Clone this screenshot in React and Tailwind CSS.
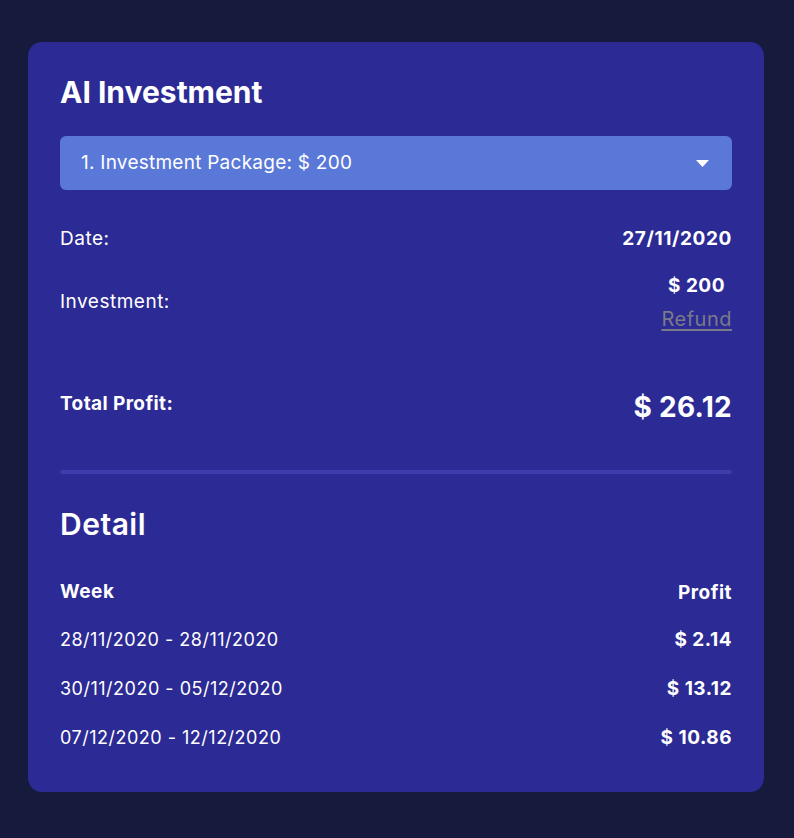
import React from "react";

const weeks = [
  { range: "28/11/2020 - 28/11/2020", profit: "$ 2.14" },
  { range: "30/11/2020 - 05/12/2020", profit: "$ 13.12" },
  { range: "07/12/2020 - 12/12/2020", profit: "$ 10.86" },
];

export default function App() {
  return (
    <div
      className="min-h-[838px] w-full bg-[#161a3c] pt-[42px] text-white"
      style={{ fontFamily: "Inter, 'Noto Sans', sans-serif" }}
    >
      <div className="ml-[28px] h-[750px] w-[736px] rounded-[14px] bg-[#2c2a94] px-8 pt-[30px]">
        {/* header */}
        <h1 className="flex h-[40px] items-center text-[30px] font-bold">AI Investment</h1>

        <button className="mt-[24px] flex h-[54px] w-full items-center justify-between rounded-md bg-[#5a78d8] pl-[21px] pr-[23px] text-left text-[19px] tracking-[0.25px]">
          <span>1. Investment Package: $ 200</span>
          <svg width="13" height="7" viewBox="0 0 13 7">
            <path d="M0 0 L13 0 L6.5 7 Z" fill="#fff" />
          </svg>
        </button>

        <div className="mt-[33px] flex h-[32px] items-center justify-between text-[19px] tracking-[0.5px]">
          <span>Date:</span>
          <span className="font-bold tracking-[0.6px]">27/11/2020</span>
        </div>

        <div className="mt-[15px] flex h-[64px] items-center justify-between text-[19px] tracking-[0.5px]">
          <span>Investment:</span>
          <div className="flex flex-col items-end">
            <span className="flex h-[32px] items-center pr-[7px] font-bold">$ 200</span>
            <a href="#" className="flex h-[32px] items-center pt-[2px] text-[20px] text-[#7b7b88] underline underline-offset-[3px]">
              Refund
            </a>
          </div>
        </div>

        <div className="mt-[54px] flex h-[36px] items-center justify-between">
          <span className="-mt-[3px] text-[19px] font-bold tracking-[0.4px]">Total Profit:</span>
          <span className="mt-[1px] text-[28px] font-bold tracking-[0.3px]">$ 26.12</span>
        </div>

        <div className="mt-[46px] h-[4px] rounded-full bg-[#3f3dac]" />

        <h2 className="mt-[30px] flex h-[40px] items-center text-[30px] font-semibold tracking-[0.5px]">Detail</h2>

        <div className="mt-[32px] flex h-[32px] items-center justify-between text-[19px] font-bold tracking-[0.5px]">
          <span>Week</span>
          <span className="mt-[2px]">Profit</span>
        </div>

        <div className="mt-[7px]">
          {weeks.map((w) => (
            <div key={w.range} className="flex h-[49px] items-center justify-between tracking-[0.5px]">
              <span className="text-[18px]">{w.range}</span>
              <span className="mt-[2px] text-[19px] font-bold">{w.profit}</span>
            </div>
          ))}
        </div>
      </div>
    </div>
  );
}
